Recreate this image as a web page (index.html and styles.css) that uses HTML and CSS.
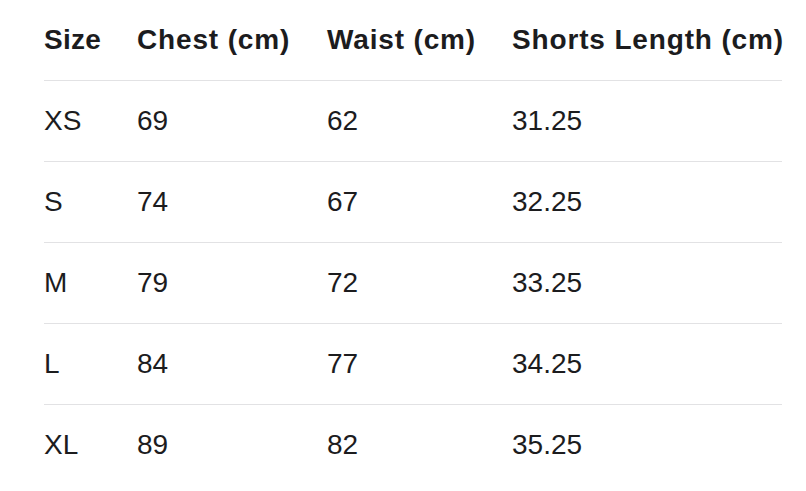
FILE: index.html
```html
<!DOCTYPE html>
<html>
<head>
<meta charset="utf-8">
<link rel="stylesheet" href="styles.css">
</head>
<body>
<table class="size-table">
  <thead>
    <tr><th class="c-size">Size</th><th class="c-chest">Chest (cm)</th><th class="c-waist">Waist (cm)</th><th class="c-len">Shorts Length (cm)</th></tr>
  </thead>
  <tbody>
    <tr><td>XS</td><td>69</td><td>62</td><td>31.25</td></tr>
    <tr><td>S</td><td>74</td><td>67</td><td>32.25</td></tr>
    <tr><td>M</td><td>79</td><td>72</td><td>33.25</td></tr>
    <tr><td>L</td><td>84</td><td>77</td><td>34.25</td></tr>
    <tr><td>XL</td><td>89</td><td>82</td><td>35.25</td></tr>
  </tbody>
</table>
</body>
</html>
```

FILE: styles.css
```css
html, body {
  margin: 0;
  padding: 0;
  background: #ffffff;
}
body {
  padding-left: 44px;
  font-family: "Liberation Sans", Arial, sans-serif;
  color: #1c1c1e;
}
.size-table {
  border-collapse: collapse;
  width: 738px;
  table-layout: fixed;
}
.size-table th,
.size-table td {
  text-align: left;
  padding: 0;
  font-size: 28px;
  white-space: nowrap;
  vertical-align: middle;
}
.size-table th {
  font-weight: 700;
  letter-spacing: 0.85px;
  height: 80px;
  border-bottom: 1px solid #e2e2e4;
}
.size-table th.c-size {
  letter-spacing: 0.3px;
}
.size-table td {
  font-weight: 400;
  height: 80px;
}
.size-table tbody tr + tr td {
  border-top: 1px solid #e2e2e4;
}
.c-size { width: 93px; }
.c-chest { width: 190px; }
.c-waist { width: 185px; }
.c-len { width: 270px; }
```
